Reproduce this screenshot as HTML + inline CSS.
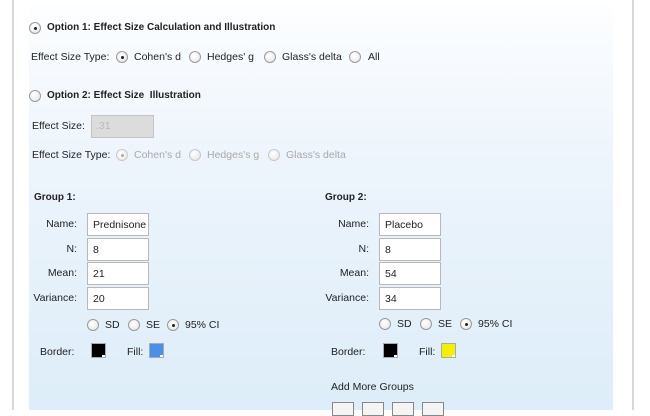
<!DOCTYPE html>
<html><head><style>
body{margin:0;width:650px;height:410px;overflow:hidden;background:#fff;font-family:"Liberation Sans",sans-serif;font-size:10.5px;color:#222;position:relative}
.a{position:absolute;white-space:nowrap;line-height:12px}
.b{font-weight:bold;font-size:10px}
.r{position:absolute;width:10px;height:10px;border:1px solid #9a9a9a;border-radius:50%;background:radial-gradient(circle at 40% 35%,#fff,#e4e4e4)}
.r.on::after{content:"";position:absolute;left:3.5px;top:3.5px;width:3px;height:3px;border-radius:50%;background:#222}
.r.dis{border-color:#c8c8c8}
.r.dis.on::after{background:#aaa}
.g{color:#aaa}
.in{position:absolute;width:62px;height:23px;border:1px solid #b8b8b8;background:#fff;box-sizing:border-box;padding:5px 5px;font-size:10.5px;line-height:12px}
.lab{position:absolute;text-align:right;width:60px;line-height:12px}
.sw{position:absolute;width:15px;height:15px;border:1px solid #aaa;box-sizing:border-box}
.sw::after{content:"";position:absolute;right:0;bottom:0;width:3px;height:2px;background:#fff}
.btn{position:absolute;top:402px;width:22px;height:14px;border:1px solid #888;background:#f4f4f4;box-sizing:border-box}
</style></head><body>
<div style="position:absolute;left:12px;top:0;width:2px;height:410px;background:#d8d8d8"></div>
<div style="position:absolute;left:632px;top:0;width:2px;height:410px;background:#d8d8d8"></div>
<div style="position:absolute;left:29px;top:4px;width:584px;height:406px;background:linear-gradient(to bottom,#fdfeff 0%,#eef5fc 35%,#ddedf9 100%)"></div>

<div class="r on" style="left:29px;top:22px"></div>
<div class="a b" style="left:47px;top:22px">Option 1: Effect Size Calculation and Illustration</div>

<div class="a" style="left:31px;top:51px">Effect Size Type:</div>
<div class="r on" style="left:116px;top:51px"></div><div class="a" style="left:134px;top:51px">Cohen's d</div>
<div class="r" style="left:189px;top:51px"></div><div class="a" style="left:207px;top:51px">Hedges' g</div>
<div class="r" style="left:264px;top:51px"></div><div class="a" style="left:282px;top:51px">Glass's delta</div>
<div class="r" style="left:349px;top:51px"></div><div class="a" style="left:368px;top:51px">All</div>

<div class="r" style="left:29px;top:90px"></div>
<div class="a b" style="left:47px;top:90px">Option 2: Effect Size&nbsp; Illustration</div>

<div class="a" style="left:32px;top:120px">Effect Size:</div>
<div style="position:absolute;left:91px;top:115px;width:63px;height:23px;background:#dcdcdc;border:1px solid #c4c4c4;box-sizing:border-box"></div>
<div class="a" style="left:96px;top:120px;color:#bbb">.31</div>

<div class="a" style="left:32px;top:149px">Effect Size Type:</div>
<div class="r dis on" style="left:116px;top:149px"></div><div class="a g" style="left:134px;top:149px">Cohen's d</div>
<div class="r dis" style="left:189px;top:149px"></div><div class="a g" style="left:207px;top:149px">Hedges's g</div>
<div class="r dis" style="left:268px;top:149px"></div><div class="a g" style="left:286px;top:149px">Glass's delta</div>

<div class="a b" style="left:34px;top:192px">Group 1:</div>
<div class="lab" style="left:17px;top:218px">Name:</div><div class="in" style="left:87px;top:213px">Prednisone</div>
<div class="lab" style="left:17px;top:243px">N:</div><div class="in" style="left:87px;top:238px">8</div>
<div class="lab" style="left:17px;top:267px">Mean:</div><div class="in" style="left:87px;top:262px">21</div>
<div class="lab" style="left:17px;top:292px">Variance:</div><div class="in" style="left:87px;top:287px">20</div>
<div class="r" style="left:87px;top:319px"></div><div class="a" style="left:105px;top:319px">SD</div>
<div class="r" style="left:128px;top:319px"></div><div class="a" style="left:146px;top:319px">SE</div>
<div class="r on" style="left:167px;top:319px"></div><div class="a" style="left:185px;top:319px">95% CI</div>
<div class="a" style="left:40px;top:346px">Border:</div><div class="sw" style="left:91px;top:343px;background:#000"></div>
<div class="a" style="left:127px;top:346px">Fill:</div><div class="sw" style="left:149px;top:343px;background:#4a90e8"></div>

<div class="a b" style="left:325px;top:192px">Group 2:</div>
<div class="lab" style="left:309px;top:218px">Name:</div><div class="in" style="left:379px;top:213px">Placebo</div>
<div class="lab" style="left:309px;top:243px">N:</div><div class="in" style="left:379px;top:238px">8</div>
<div class="lab" style="left:309px;top:267px">Mean:</div><div class="in" style="left:379px;top:262px">54</div>
<div class="lab" style="left:309px;top:292px">Variance:</div><div class="in" style="left:379px;top:287px">34</div>
<div class="r" style="left:379px;top:318px"></div><div class="a" style="left:397px;top:318px">SD</div>
<div class="r" style="left:420px;top:318px"></div><div class="a" style="left:438px;top:318px">SE</div>
<div class="r on" style="left:460px;top:318px"></div><div class="a" style="left:478px;top:318px">95% CI</div>
<div class="a" style="left:331px;top:346px">Border:</div><div class="sw" style="left:383px;top:343px;background:#000"></div>
<div class="a" style="left:419px;top:346px">Fill:</div><div class="sw" style="left:441px;top:343px;background:#f5f000"></div>

<div class="a" style="left:331px;top:381px">Add More Groups</div>
<div class="btn" style="left:332px"></div>
<div class="btn" style="left:362px"></div>
<div class="btn" style="left:392px"></div>
<div class="btn" style="left:422px"></div>
</body></html>
